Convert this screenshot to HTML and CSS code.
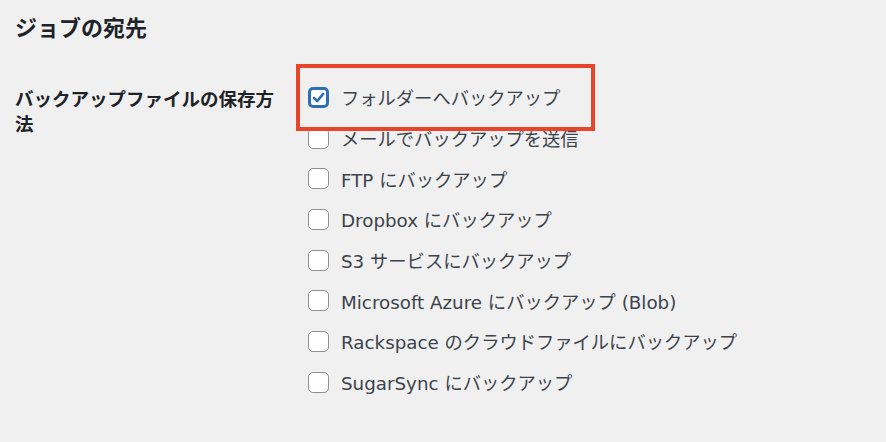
FILE: index.html
```html
<!DOCTYPE html>
<html lang="ja">

<head>
  <meta charset="UTF-8">
  <meta name="viewport" content="width=device-width, initial-scale=1.0">
  <title>ジョブの宛先</title>
  <link rel="stylesheet" href="styles.css">
</head>

<body>
  <div class="wrap">
    <h2 class="title">ジョブの宛先</h2>

    <div class="form-row">
      <div class="row-label">バックアップファイルの保存方法</div>
      <div class="options">
        <div class="option">
          <span class="box checked">
            <svg viewBox="0 0 20 20" width="17" height="17">
              <path d="M4 10.5 L8.2 14.8 L16.2 5.2" fill="none" stroke="#2d6fb3" stroke-width="3.4" stroke-linecap="round" stroke-linejoin="round"/>
            </svg>
          </span>
          <span>フォルダーへバックアップ</span>
        </div>
        <div class="option"><span class="box"></span><span>メールでバックアップを送信</span></div>
        <div class="option"><span class="box"></span><span>FTP にバックアップ</span></div>
        <div class="option"><span class="box"></span><span>Dropbox にバックアップ</span></div>
        <div class="option"><span class="box"></span><span>S3 サービスにバックアップ</span></div>
        <div class="option"><span class="box"></span><span>Microsoft Azure にバックアップ (Blob)</span></div>
        <div class="option"><span class="box"></span><span>Rackspace のクラウドファイルにバックアップ</span></div>
        <div class="option"><span class="box"></span><span>SugarSync にバックアップ</span></div>
      </div>
    </div>

    <!-- annotation round the first choice -->
    <div class="highlight"></div>
  </div>
</body>

</html>
```

FILE: styles.css
```css
html {
  font-family: "DejaVu Sans", "Noto Sans CJK JP", sans-serif;
}

body {
  background-color: #f0f0f1;
  margin: 0;
}

.wrap {
  position: relative;
  padding: 0 15px;
  height: 442px;
  box-sizing: border-box;
  overflow: hidden;
}

.title {
  margin: 12px 0 0;
  font-family: "Noto Sans CJK JP", sans-serif;
  font-size: 22px;
  line-height: 29px;
  font-weight: 700;
  color: #1d2327;
}

.form-row {
  display: grid;
  grid-template-columns: 293px 1fr;
  margin-top: 36px;
}

.row-label {
  width: 270px;
  padding-top: 9px;
  font-family: "Noto Sans CJK JP", sans-serif;
  font-size: 18.5px;
  line-height: 25px;
  font-weight: 700;
  color: #1d2327;
}

.options {
  display: flex;
  flex-direction: column;
}

.option {
  display: flex;
  align-items: center;
  gap: 12px;
  height: 40.7px;
  font-size: 18.3px;
  color: #3c434a;
}

.box {
  width: 21px;
  height: 21px;
  box-sizing: border-box;
  border: 1.6px solid #8c8f94;
  border-radius: 5px;
  background-color: #fff;
  display: flex;
  justify-content: center;
  align-items: center;
  flex-shrink: 0;
}

.box.checked {
  border: 3px solid #2d6fb3;
}

.highlight {
  position: absolute;
  left: 296px;
  top: 64px;
  width: 299px;
  height: 67px;
  box-sizing: border-box;
  border: 4px solid #e8442c;
}
```
